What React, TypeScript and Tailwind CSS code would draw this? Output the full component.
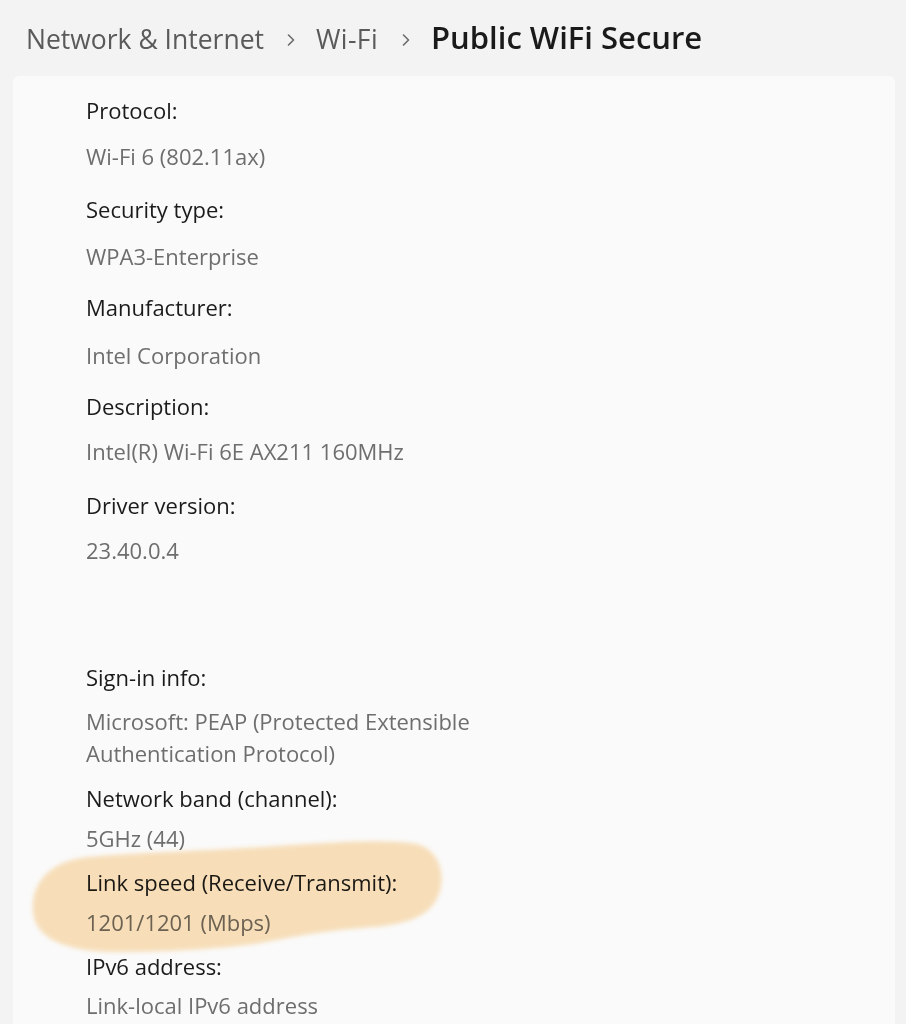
import React from 'react';

const rows = [
  { label: 'Protocol:', value: ['Wi-Fi 6 (802.11ax)'], lt: 'mt-0', vt: 'mt-[15px]' },
  { label: 'Security type:', value: ['WPA3-Enterprise'], lt: 'mt-[22px]', vt: 'mt-[16px]' },
  { label: 'Manufacturer:', value: ['Intel Corporation'], lt: 'mt-[20px]', vt: 'mt-[17px]' },
  { label: 'Description:', value: ['Intel(R) Wi-Fi 6E AX211 160MHz'], lt: 'mt-[20px]', vt: 'mt-[14px]' },
  { label: 'Driver version:', value: ['23.40.0.4'], lt: 'mt-[23px]', vt: 'mt-[14px]' },
  {
    label: 'Sign-in info:',
    value: ['Microsoft: PEAP (Protected Extensible', 'Authentication Protocol)'],
    lt: 'mt-[96px]',
    vt: 'mt-[13px]',
  },
  { label: 'Network band (channel):', value: ['5GHz (44)'], lt: 'mt-[14px]', vt: 'mt-[9px]' },
  { label: 'Link speed (Receive/Transmit):', value: ['1201/1201 (Mbps)'], lt: 'mt-[13px]', vt: 'mt-[9px]', mark: true },
  { label: 'IPv6 address:', value: ['Link-local IPv6 address'], lt: 'mt-[13px]', vt: 'mt-[8px]' },
];

const Chevron = ({ className }: { className: string }) => (
  <span className={`text-[26px] leading-[31px] ${className}`}>
    <svg
      className="inline-block align-middle -translate-y-[2px]"
      width="8"
      height="12"
      viewBox="0 0 8 12"
      fill="none"
      stroke="#6b6b6b"
      strokeWidth="1.6"
      strokeLinecap="round"
      strokeLinejoin="round"
    >
      <path d="M1.5 1 L6.5 6 L1.5 11" />
    </svg>
  </span>
);

// hand-drawn highlighter mark over the link speed row
const Highlight = () => (
  <svg
    className="absolute left-[-56px] top-[-28px] pointer-events-none mix-blend-multiply blur-[2px]"
    width="420"
    height="120"
    viewBox="0 0 420 120"
  >
    <path
      d="M3 74 C0 44 20 22 58 18 C112 13 172 12 232 8 C292 4 352 -1 387 5 C409 11 415 34 410 52 C403 76 381 84 346 88 C301 91 272 96 242 102 C202 110 142 113 82 113 C34 112 6 99 3 74 Z"
      fill="#fce3bd"
    />
  </svg>
);

const App = () => {
  return (
    <div className="h-[1024px] overflow-hidden bg-[#f3f3f3] font-['Open_Sans','Noto_Sans',sans-serif]">
      {/* Breadcrumb */}
      <div className="h-[76px] pt-[22px] pl-[26px] flex items-baseline">
        <span className="text-[26.5px] leading-[31px] text-[#5a5a5a]">Network &amp; Internet</span>
        <Chevron className="ml-[23px] mr-[21px]" />
        <span className="text-[26.5px] leading-[31px] tracking-[0.4px] text-[#5a5a5a]">Wi-Fi</span>
        <Chevron className="ml-[24px] mr-[21px]" />
        <span className="text-[31px] leading-[31px] font-semibold text-[#1a1a1a]">Public WiFi Secure</span>
      </div>

      {/* Properties card */}
      <div className="ml-[13px] mr-[11px] h-[1000px] rounded-[6px] bg-[#fafafa] pl-[73px] pt-[19px]">
        {rows.map(row => (
          <div key={row.label} className={`relative ${row.lt}`}>
            <div className="text-[22px] leading-[30px] text-[#1b1b1b]">{row.label}</div>
            <div className={`text-[22px] leading-[32px] text-[#6e6e6e] ${row.vt}`}>
              {row.value.map(line => (
                <div key={line}>{line}</div>
              ))}
            </div>
            {row.mark && <Highlight />}
          </div>
        ))}
      </div>
    </div>
  );
};

export default App;
